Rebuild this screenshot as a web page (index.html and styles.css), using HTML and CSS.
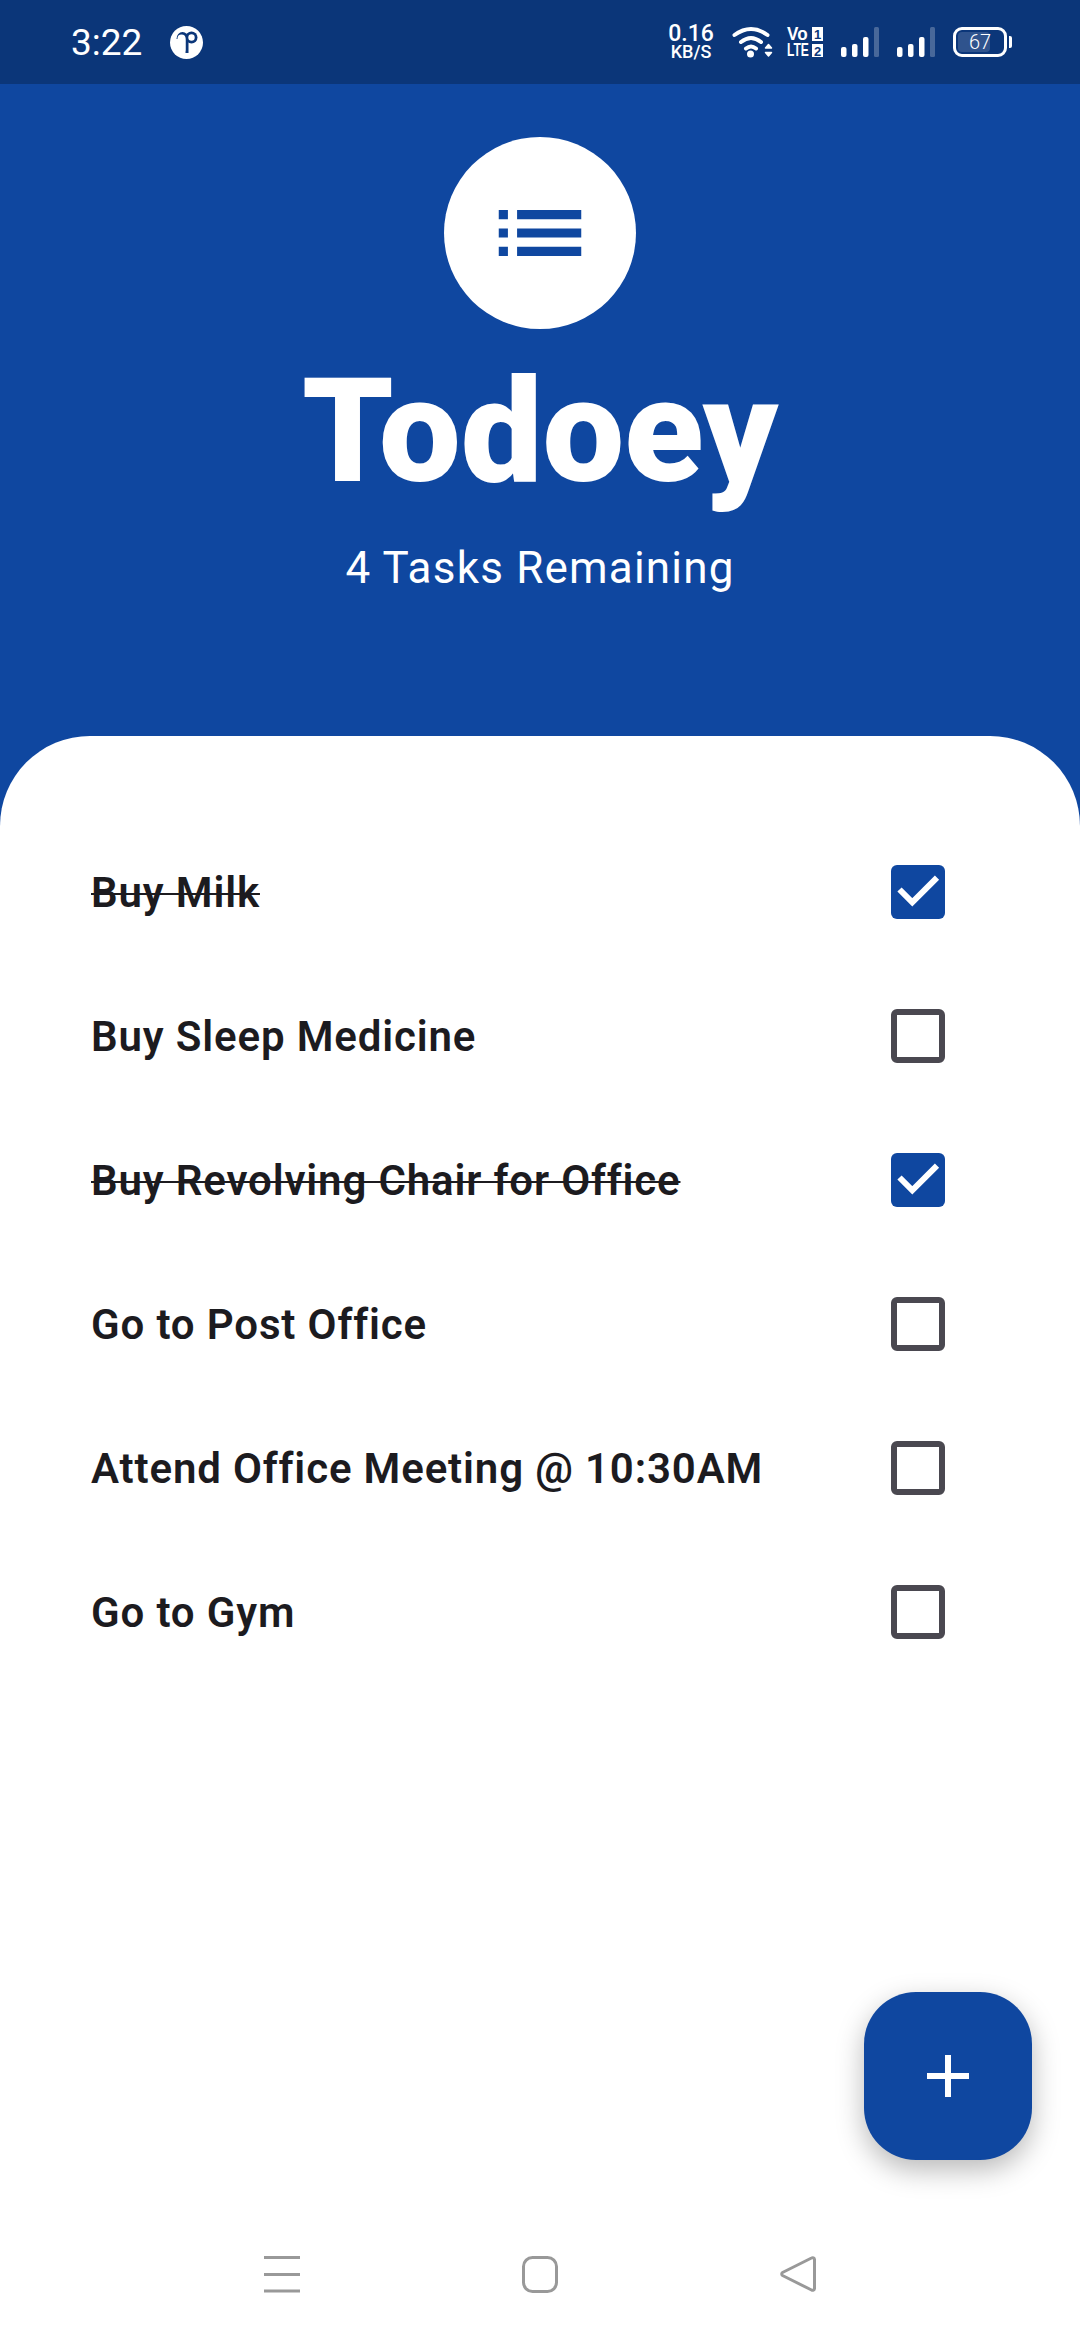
FILE: index.html
```html
<!DOCTYPE html>
<html lang="en">
<head>
    <meta charset="UTF-8">
    <meta name="viewport" content="width=device-width, initial-scale=1.0">
    <title>Todoey</title>
    <link rel="stylesheet" href="styles.css">
</head>
<body>
    <div class="app">
        <!-- Status bar -->
        <div class="status-bar">
            <div class="status-left">
                <span class="status-time">3:22</span>
                <svg class="status-logo" width="33" height="33" viewBox="0 0 33 33">
                    <circle cx="16.5" cy="16.5" r="16.5" fill="#fff"/>
                    <circle cx="21.500" cy="11.500" r="6" fill="#0b3679"/>
                    <path d="M6.500 13a6 7 0 0 1 12 0V27h-3V13a3 3.500 0 0 0-6 0z" fill="#0b3679"/>
                    <rect x="7.500" y="8.500" width="8" height="19" rx="4" fill="#fff"/>
                    <circle cx="21.500" cy="11.500" r="3.200" fill="#fff"/>
                </svg>
            </div>
            <div class="status-right">
                <div class="net-speed">
                    <span class="net-value">0.16</span>
                    <span class="net-unit">KB/S</span>
                </div>
                <svg class="wifi-icon" width="41" height="32" viewBox="0 0 41 32">
                    <path d="M2.500 9Q19-3 35.500 9M9 16Q19 8 29 16M14 22.500Q19 18.500 24 22.500" fill="none" stroke="#fff" stroke-width="4" stroke-linecap="round"/>
                    <circle cx="18.500" cy="28" r="3.500" fill="#fff"/>
                    <path d="M33.500 22l3-3.500 3 3.500zM33.500 26.500l3 3.500 3-3.500z" fill="#fff" stroke="#fff" stroke-width="1.500" stroke-linejoin="round"/>
                </svg>
                <svg class="volte-icon" width="36" height="30" viewBox="0 0 36 30">
                    <text class="volte-text" transform="translate(0 13) scale(.95 1)">Vo</text>
                    <text class="volte-text" transform="translate(0 29) scale(.67 1)">LTE</text>
                    <rect x="25" y="0" width="11" height="14" fill="#fff"/>
                    <rect x="25" y="17" width="11" height="13" fill="#fff"/>
                    <text class="volte-num" x="30.500" y="12">1</text>
                    <text class="volte-num" x="30.500" y="28.500">2</text>
                </svg>
                <svg class="signal-icon" width="38" height="30" viewBox="0 0 38 30">
                    <rect x="0" y="20" width="5.500" height="10" rx="2" fill="#fff"/>
                    <rect x="11" y="17" width="5.500" height="13" rx="2" fill="#fff"/>
                    <rect x="22" y="10" width="5.500" height="20" rx="2" fill="#fff"/>
                    <rect x="33" y="0" width="5" height="30" rx="1.500" fill="#fff" opacity=".25"/>
                </svg>
                <svg class="signal-icon" width="38" height="30" viewBox="0 0 38 30">
                    <rect x="0" y="20" width="5.500" height="10" rx="2" fill="#fff"/>
                    <rect x="11" y="17" width="5.500" height="13" rx="2" fill="#fff"/>
                    <rect x="22" y="10" width="5.500" height="20" rx="2" fill="#fff"/>
                    <rect x="33" y="0" width="5" height="30" rx="1.500" fill="#fff" opacity=".25"/>
                </svg>
                <div class="battery">
                    <div class="battery-body">
                        <div class="battery-fill"></div>
                        <span class="battery-level">67</span>
                    </div>
                    <div class="battery-nub"></div>
                </div>
            </div>
        </div>

        <!-- Header -->
        <header class="header">
            <div class="avatar">
                <svg width="110" height="110" viewBox="0 0 24 24">
                    <path d="M3 13h2v-2H3v2zm0 4h2v-2H3v2zm0-8h2V7H3v2zm4 4h14v-2H7v2zm0 4h14v-2H7v2zM7 7v2h14V7H7z" fill="#0f47a0"/>
                </svg>
            </div>
            <h1 class="title">Todoey</h1>
            <p class="subtitle">4 Tasks Remaining</p>
        </header>

        <!-- Task list -->
        <main class="sheet">
            <ul class="task-list">
                <li class="task done">
                    <span class="task-name">Buy Milk</span>
                    <span class="checkbox checked">
                        <svg width="54" height="54" viewBox="0 0 54 54"><path d="M8.500 24.500l12.800 12.800L46 12.700" fill="none" stroke="#fff" stroke-width="6"/></svg>
                    </span>
                </li>
                <li class="task">
                    <span class="task-name">Buy Sleep Medicine</span>
                    <span class="checkbox"></span>
                </li>
                <li class="task done">
                    <span class="task-name">Buy Revolving Chair for Office</span>
                    <span class="checkbox checked">
                        <svg width="54" height="54" viewBox="0 0 54 54"><path d="M8.500 24.500l12.800 12.800L46 12.700" fill="none" stroke="#fff" stroke-width="6"/></svg>
                    </span>
                </li>
                <li class="task">
                    <span class="task-name">Go to Post Office</span>
                    <span class="checkbox"></span>
                </li>
                <li class="task">
                    <span class="task-name">Attend Office Meeting @ 10:30AM</span>
                    <span class="checkbox"></span>
                </li>
                <li class="task">
                    <span class="task-name">Go to Gym</span>
                    <span class="checkbox"></span>
                </li>
            </ul>

            <!-- Navigation bar -->
            <nav class="nav-bar">
                <svg width="36" height="37" viewBox="0 0 36 37">
                    <path d="M0 1.500h36M0 18.500h36M0 35h36" stroke="#999" stroke-width="3"/>
                </svg>
                <svg width="36" height="37" viewBox="0 0 36 37">
                    <rect x="1.500" y="1.500" width="33" height="34" rx="9" fill="none" stroke="#999" stroke-width="3"/>
                </svg>
                <svg width="36" height="37" viewBox="0 0 36 37">
                    <path d="M31.500 2a2 2 0 0 1 3 1.500v29a2 2 0 0 1-3 1.500L2.500 19.500a1.800 1.800 0 0 1 0-3z" fill="none" stroke="#999" stroke-width="3" stroke-linejoin="round"/>
                </svg>
            </nav>

            <button class="fab">
                <svg width="42" height="42" viewBox="0 0 42 42"><path d="M21 0v42M0 21h42" stroke="#fff" stroke-width="6"/></svg>
            </button>
        </main>
    </div>
</body>
</html>
```

FILE: styles.css
```css
/* --- Page --- */
* {
    box-sizing: border-box;
}

body {
    margin: 0;
    font-family: Roboto, "Noto Sans", sans-serif;
}

.app {
    position: relative;
    display: flex;
    flex-direction: column;
    width: 1080px;
    height: 2340px;
    overflow: hidden;
    background-color: #0f47a0;
}

/* --- Status Bar --- */
.status-bar {
    display: flex;
    justify-content: space-between;
    align-items: center;
    height: 84px;
    padding: 0 68px 0 71px;
    background-color: #0b3679;
    color: white;
}

.status-left {
    display: flex;
    align-items: center;
    gap: 28px;
}

.status-time {
    font-size: 37px;
    font-weight: 400;
}

.status-right {
    display: flex;
    align-items: center;
}

.net-speed {
    display: flex;
    flex-direction: column;
    align-items: center;
    width: 46px;
    margin-right: 18px;
    font-weight: 500;
}

.net-value {
    font-size: 23px;
    line-height: 20px;
}

.net-unit {
    font-size: 18px;
    line-height: 16px;
}

.wifi-icon {
    margin-right: 14px;
}

.volte-icon {
    margin-right: 18px;
    overflow: visible;
}

.volte-text {
    font-family: "Liberation Sans", sans-serif;
    font-size: 18px;
    font-weight: 700;
    fill: white;
}

.volte-num {
    font-family: "Liberation Sans", sans-serif;
    font-size: 13px;
    font-weight: 700;
    fill: #0b3679;
    text-anchor: middle;
}

.signal-icon {
    margin-right: 18px;
}

.battery {
    display: flex;
    align-items: center;
    gap: 2px;
}

.battery-body {
    position: relative;
    display: flex;
    justify-content: center;
    align-items: center;
    width: 54px;
    height: 30px;
    border: 3px solid white;
    border-radius: 9px;
}

.battery-fill {
    position: absolute;
    top: 2px;
    bottom: 2px;
    left: 2px;
    width: 32px;
    border-radius: 4px;
    background-color: rgba(255, 255, 255, 0.15);
}

.battery-level {
    position: relative;
    font-size: 20px;
    font-weight: 300;
}

.battery-nub {
    width: 3px;
    height: 12px;
    border-radius: 0 2px 2px 0;
    background-color: white;
}

/* --- Header --- */
.header {
    display: flex;
    flex-direction: column;
    align-items: center;
    height: 652px;
    padding-top: 53px;
    color: white;
}

.avatar {
    display: flex;
    justify-content: center;
    align-items: center;
    width: 192px;
    height: 192px;
    border-radius: 50%;
    background-color: white;
}

.title {
    margin: 23px 0 0;
    font-size: 145.5px;
    font-weight: 900;
    line-height: 160px;
}

.subtitle {
    margin: 30px 0 0;
    font-size: 44px;
    line-height: 52px;
    letter-spacing: 1.2px;
}

/* --- Task List --- */
.sheet {
    flex: 1;
    display: flex;
    flex-direction: column;
    border-radius: 90px 90px 0 0;
    background-color: white;
}

.task-list {
    flex: 1;
    margin: 0;
    padding: 84px 135px 0 91px;
    list-style: none;
}

.task {
    display: flex;
    justify-content: space-between;
    align-items: center;
    height: 144px;
}

.task-name {
    font-size: 42px;
    font-weight: 600;
    letter-spacing: 0.85px;
    color: #1c1b1f;
}

.done .task-name {
    text-decoration: line-through;
    text-decoration-thickness: 2px;
}

.checkbox {
    width: 54px;
    height: 54px;
    border: 6px solid #4a4850;
    border-radius: 6px;
}

.checked {
    border: none;
    background-color: #0f47a0;
}

.checked svg {
    display: block;
}

/* --- Navigation Bar --- */
.nav-bar {
    display: flex;
    justify-content: space-between;
    height: 132px;
    padding: 48px 264px 0;
}

/* --- Add Button --- */
.fab {
    position: absolute;
    right: 48px;
    bottom: 180px;
    display: flex;
    justify-content: center;
    align-items: center;
    width: 168px;
    height: 168px;
    border: none;
    border-radius: 52px;
    background-color: #0f47a0;
    box-shadow: 0 10px 28px rgba(0, 0, 0, 0.28);
}
```
